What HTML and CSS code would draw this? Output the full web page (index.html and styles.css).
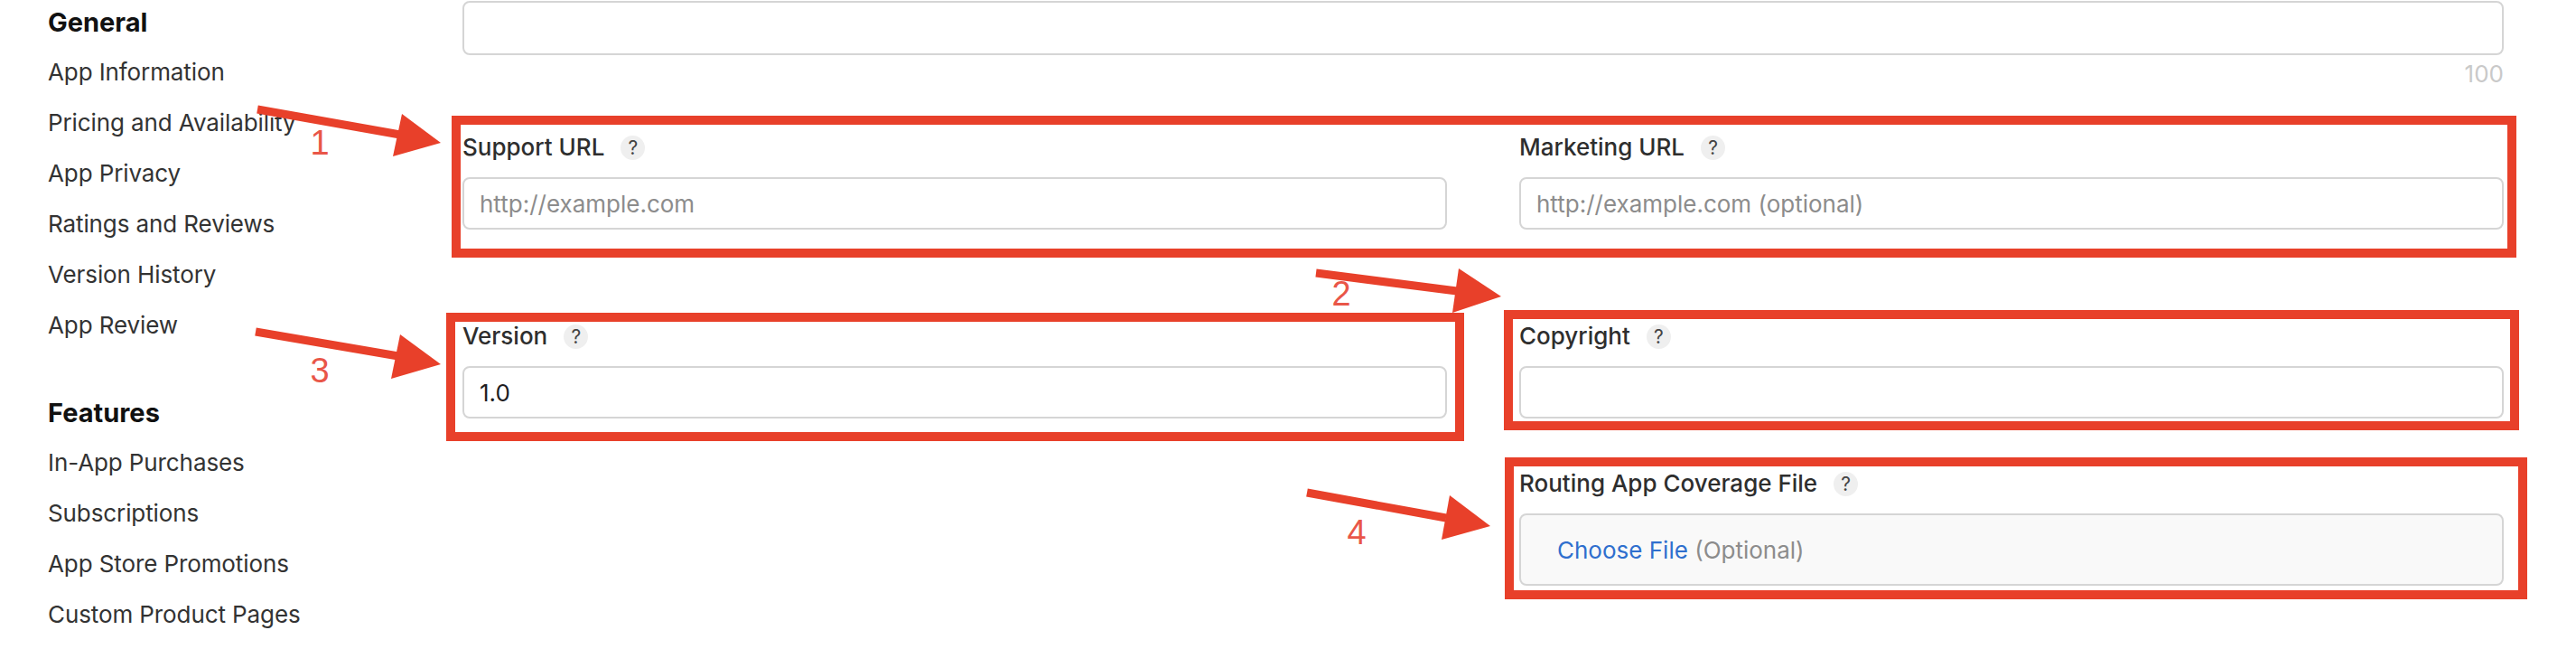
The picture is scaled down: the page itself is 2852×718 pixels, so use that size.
FILE: index.html
```html
<!DOCTYPE html>
<html lang="en">
<head>
<meta charset="utf-8">
<title>App Information</title>
<link rel="stylesheet" href="styles.css">
</head>
<body>
<div class="page">
  <nav class="sidebar">
    <div class="nav-group">
      <h2 class="nav-title">General</h2>
      <ul class="nav-list">
        <li>App Information</li>
        <li>Pricing and Availability</li>
        <li>App Privacy</li>
        <li>Ratings and Reviews</li>
        <li>Version History</li>
        <li>App Review</li>
      </ul>
    </div>
    <div class="nav-group">
      <h2 class="nav-title">Features</h2>
      <ul class="nav-list">
        <li>In-App Purchases</li>
        <li>Subscriptions</li>
        <li>App Store Promotions</li>
        <li>Custom Product Pages</li>
      </ul>
    </div>
  </nav>

  <main class="main">
    <div class="top-field">
      <div class="input"></div>
      <div class="counter">100</div>
    </div>

    <div class="row row-urls">
      <div class="field">
        <div class="label">Support URL <span class="help">?</span></div>
        <div class="input"><span class="placeholder">http://example.com</span></div>
      </div>
      <div class="field">
        <div class="label">Marketing URL <span class="help">?</span></div>
        <div class="input"><span class="placeholder">http://example.com (optional)</span></div>
      </div>
    </div>

    <div class="row row-meta">
      <div class="field">
        <div class="label">Version <span class="help">?</span></div>
        <div class="input"><span class="value">1.0</span></div>
      </div>
      <div class="stack">
        <div class="field">
          <div class="label">Copyright <span class="help">?</span></div>
          <div class="input"></div>
        </div>
        <div class="field">
          <div class="label">Routing App Coverage File <span class="help">?</span></div>
          <div class="input file"><span class="choose">Choose File</span>&nbsp;<span class="placeholder">(Optional)</span></div>
        </div>
      </div>
    </div>
  </main>
</div>

<svg class="annotations" width="2852" height="718" viewBox="0 0 2852 718" xmlns="http://www.w3.org/2000/svg">
  <g fill="none" stroke="#e8402a" stroke-width="10">
    <rect x="505" y="133" width="2276" height="147"/>
    <rect x="499" y="351" width="1117" height="132"/>
    <rect x="1670" y="348" width="1114" height="123"/>
    <rect x="1671" y="511" width="1122" height="147"/>
  </g>
  <g stroke="#e8402a" stroke-width="9">
    <line x1="285" y1="121" x2="443" y2="149"/>
    <line x1="283" y1="367" x2="441" y2="394"/>
    <line x1="1457" y1="302" x2="1613" y2="322"/>
    <line x1="1447" y1="545" x2="1601" y2="573"/>
  </g>
  <g fill="#e8402a">
    <polygon points="445,126 488,158 435,173"/>
    <polygon points="443,370 488,403 433,419"/>
    <polygon points="1615,297 1662,328 1608,346"/>
    <polygon points="1605,548 1650,582 1596,597"/>
  </g>
  <g class="num" fill="#e95648" text-anchor="middle">
    <text x="354" y="171">1</text>
    <text x="1485" y="338">2</text>
    <text x="354" y="423">3</text>
    <text x="1502" y="602">4</text>
  </g>
</svg>
</body>
</html>
```

FILE: styles.css
```css
html, body {
  margin: 0;
  padding: 0;
  background: #ffffff;
  overflow: hidden;
}

body {
  position: relative;
  width: 2852px;
  height: 718px;
  font-family: Inter, "Noto Sans", "Liberation Sans", sans-serif;
  color: #333333;
}

.page {
  display: flex;
  width: 2852px;
}

/* Sidebar */
.sidebar {
  width: 459px;
  padding: 5px 0 0 53px;
  display: flex;
  flex-direction: column;
  gap: 49px;
}

.nav-title {
  margin: 0 0 7px 0;
  font-size: 29px;
  line-height: 40px;
  font-weight: 700;
  color: #111111;
}

.nav-list {
  list-style: none;
  margin: 0;
  padding: 0;
}

.nav-list li {
  font-size: 26px;
  letter-spacing: -0.1px;
  line-height: 56px;
  color: #333333;
  white-space: nowrap;
}

/* Main form */
.main {
  width: 2260px;
  padding-top: 1px;
}

.input {
  box-sizing: border-box;
  height: 58px;
  border: 2px solid #d5d5d5;
  border-radius: 8px;
  background: #ffffff;
  display: flex;
  align-items: center;
  padding-left: 17px;
  font-size: 26px;
}

.top-field .input {
  height: 60px;
}

.counter {
  text-align: right;
  font-size: 26px;
  line-height: 34px;
  margin-top: 4px;
  color: #c9c9c9;
}

.row {
  display: grid;
  grid-template-columns: 1090px 1090px;
  column-gap: 80px;
}

.row-urls {
  margin-top: 47px;
}

.row-meta {
  margin-top: 101px;
}

.stack {
  display: flex;
  flex-direction: column;
  gap: 55px;
}

.field {
  display: flex;
  flex-direction: column;
  gap: 16px;
}

.label {
  display: flex;
  align-items: center;
  gap: 18px;
  font-size: 26px;
  line-height: 34px;
  font-weight: 500;
  color: #2e2e2e;
}

.help {
  width: 27px;
  height: 27px;
  border-radius: 50%;
  background: #efefef;
  color: #444444;
  font-size: 21px;
  font-weight: 400;
  line-height: 27px;
  text-align: center;
}

.placeholder {
  color: #8c8c8c;
}

.value {
  color: #1d1d1f;
}

.input.file {
  height: 80px;
  background: #f9f9f9;
  padding-left: 40px;
}

.choose {
  color: #2f6fce;
}

/* Annotation overlay */
.annotations {
  position: absolute;
  top: 0;
  left: 0;
  pointer-events: none;
}

.num {
  font-family: "Liberation Sans", Arial, sans-serif;
  font-size: 38px;
}
```
